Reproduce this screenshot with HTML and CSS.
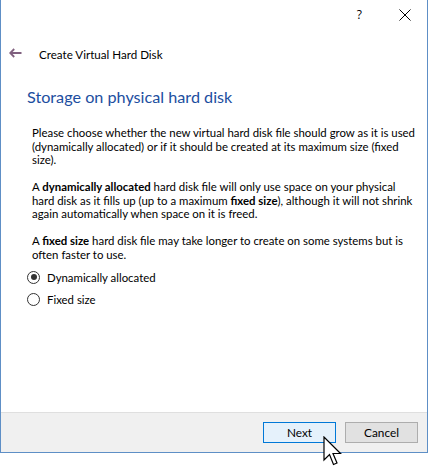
FILE: index.html
```html
<!DOCTYPE html>
<html>
<head>
<meta charset="utf-8">
<link rel="stylesheet" href="styles.css">
</head>
<body>
<div class="screen">
<div class="window">
  <div class="titlebar">
    <span class="help">?</span>
    <span class="close">
      <svg width="12" height="12" viewBox="0 0 12 12"><path d="M0.5 0.5 L11.5 11.5 M11.5 0.5 L0.5 11.5" stroke="#000" stroke-width="1" fill="none"/></svg>
    </span>
  </div>
  <div class="header">
    <span class="back">
      <svg width="13" height="10" viewBox="0 0 13 10"><path d="M1.2 5 H12.5 M5.2 1 L1.2 5 L5.2 9" stroke="#80607f" stroke-width="1.8" fill="none"/></svg>
    </span>
    <span class="wizard-title">Create Virtual Hard Disk</span>
  </div>
  <div class="content">
    <h1 class="page-title">Storage on physical hard disk</h1>
    <p class="para">Please choose whether the new virtual hard disk file should grow as it is used<br>(dynamically allocated) or if it should be created at its maximum size (fixed<br>size).</p>
    <p class="para">A <b>dynamically allocated</b> hard disk file will only use space on your physical<br>hard disk as it fills up (up to a maximum <b>fixed size</b>), although it will not shrink<br>again automatically when space on it is freed.</p>
    <p class="para">A <b>fixed size</b> hard disk file may take longer to create on some systems but is<br>often faster to use.</p>
    <div class="radios">
      <div class="radio"><span class="dot checked"></span><span>Dynamically allocated</span></div>
      <div class="radio"><span class="dot"></span><span>Fixed size</span></div>
    </div>
  </div>
  <div class="footer">
    <button class="btn btn-primary">Next</button>
    <button class="btn">Cancel</button>
  </div>
</div>
<svg class="cursor" width="20" height="31" viewBox="0 0 20 31"><path d="M1 1 L1 24 L6.5 18.5 L10.5 28.5 L14 27 L10 17.5 L17.5 17.5 Z" fill="#fff" stroke="#000" stroke-width="1.2" stroke-linejoin="miter"/></svg>
</div>
</body>
</html>
```
FILE: styles.css
```css
html, body {
  margin: 0;
  padding: 0;
  background: #fff;
}
body {
  font-family: "Lato", "Open Sans", sans-serif;
  font-size: 11.4px;
  color: #000;
}
.screen {
  position: relative;
  width: 428px;
  height: 467px;
  overflow: hidden;
}
.window {
  width: 426px;
  height: 452px;
  border: 1px solid #5e8fc6;
  border-top: none;
  display: flex;
  flex-direction: column;
  background: #fff;
}
.titlebar {
  height: 30px;
  display: flex;
  justify-content: flex-end;
  align-items: center;
}
.help {
  font-family: "Open Sans", sans-serif;
  font-size: 12px;
  margin-right: 37px;
  margin-top: -2px;
}
.close {
  display: flex;
  margin-right: 16px;
  margin-top: -1px;
}
.header {
  display: flex;
  align-items: center;
  height: 48px;
  padding-left: 8px;
}
.back {
  display: flex;
  width: 30px;
  margin-top: -2px;
}
.wizard-title {
  font-size: 11.6px;
}
.content {
  padding: 8px 0 0 26px;
  flex: 1;
}
.page-title {
  margin: 0;
  font-weight: normal;
  font-size: 16.2px;
  color: #1c4ea0;
  line-height: 22px;
}
.para {
  margin: 13.5px 0 0 5px;
  line-height: 13.5px;
  white-space: nowrap;
}
.page-title + .para {
  margin-top: 18px;
}
.radios {
  margin-top: 5px;
}
.radio {
  display: flex;
  align-items: center;
  height: 22px;
}
.dot {
  width: 11px;
  height: 11px;
  border: 1px solid #333;
  border-radius: 50%;
  margin-right: 7px;
  position: relative;
  box-sizing: content-box;
}
.dot.checked::after {
  content: "";
  position: absolute;
  left: 2.5px;
  top: 2.5px;
  width: 6px;
  height: 6px;
  border-radius: 50%;
  background: #333;
}
.footer {
  height: 39px;
  border-top: 1px solid #dfdfdf;
  background: #f0f0f0;
  display: flex;
  justify-content: flex-end;
  align-items: center;
  padding-right: 9px;
  gap: 9px;
}
.btn {
  font-family: inherit;
  font-size: 11.8px;
  width: 73px;
  height: 21px;
  border: 1px solid #adadad;
  background: #e1e1e1;
  color: #000;
  padding: 0;
}
.btn-primary {
  border-color: #0078d7;
  background: #e5f1fb;
}
.cursor {
  position: absolute;
  left: 323px;
  top: 436px;
  z-index: 5;
}
```
